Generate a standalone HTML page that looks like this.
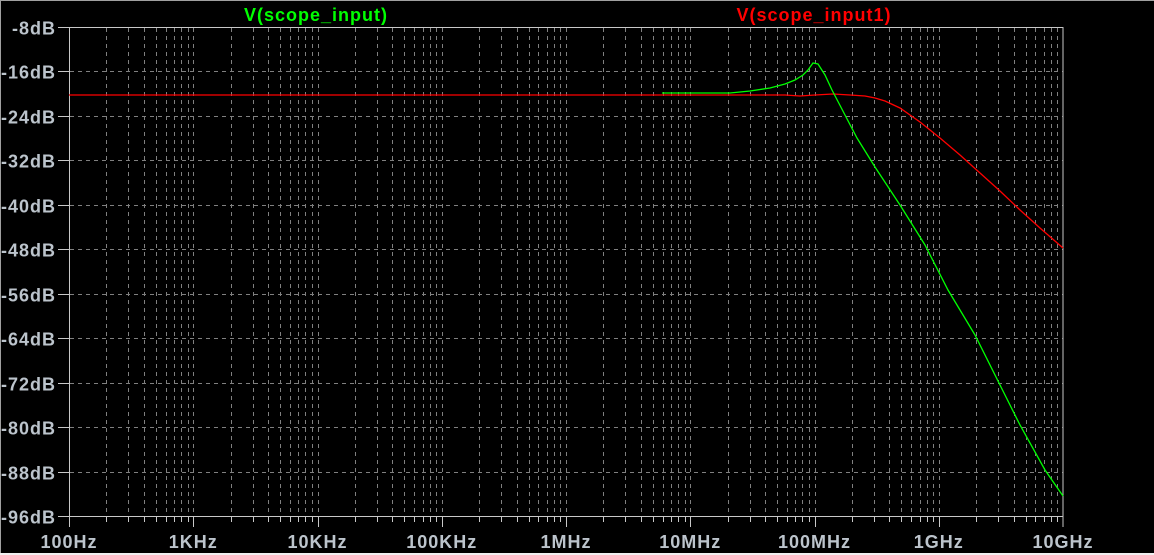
<!DOCTYPE html>
<html><head><meta charset="utf-8"><style>
html,body{margin:0;padding:0;background:#000;width:1154px;height:555px;overflow:hidden}
svg{display:block}
text{font-family:"Liberation Sans",sans-serif;font-weight:bold;font-size:18px;letter-spacing:1px}
</style></head><body>
<svg id="s" width="1154" height="555" xmlns="http://www.w3.org/2000/svg">
<rect x="0" y="0" width="1154" height="555" fill="#000"/>
<line x1="0.5" y1="0" x2="0.5" y2="555" stroke="#a0a0a0"/>
<line x1="0" y1="0.5" x2="1154" y2="0.5" stroke="#a0a0a0"/>
<rect x="0" y="553" width="1154" height="2" fill="#f0f0f0"/>
<g id="grid"></g>
<rect x="69.5" y="27.5" width="993.5" height="489" fill="none" stroke="#c8c8c8"/>
<text x="316" y="21" fill="#00ff00" text-anchor="middle">V(scope_input)</text>
<text x="814" y="21" fill="#ff0000" text-anchor="middle">V(scope_input1)</text>
<g id="lbl" fill="#bcc4cc"></g>
<polyline fill="none" stroke="#ff0000" stroke-width="1.3" points="69,95 785,95 800,96 815,95 833,94 850,95 865,96 875,98 885,101 900,108 920,122 940,138 960,155 980,173 1000,191 1020,210 1040,228 1063,248"/>
<polyline fill="none" stroke="#00ff00" stroke-width="1.3" points="662,93 730,93 750,91 770,88 785,84 795,80 803,75 808,70 813,63 818,64 825,75 832,90 845,115 857,138 875,167 900,205 925,245 948,290 975,335 1000,385 1020,425 1045,470 1063,496"/>
</svg>
<script>
var g=document.getElementById('grid'),l=document.getElementById('lbl'),h='',t='';
var X0=69,D=124.25,Y0=27,DY=44.45;
for(var d=0;d<8;d++){for(var k=2;k<=9;k++){var x=Math.round(X0+D*(d+Math.log10(k)))+0.5;
h+='<line x1="'+x+'" y1="28" x2="'+x+'" y2="516" stroke="#808080" stroke-dasharray="4,4"/>';
h+='<line x1="'+x+'" y1="516" x2="'+x+'" y2="522" stroke="#c8c8c8"/>';}}
for(var d=1;d<8;d++){var x=Math.round(X0+D*d)+0.5;h+='<line x1="'+x+'" y1="28" x2="'+x+'" y2="527" stroke="#808080" stroke-dasharray="4,4"/>';h+='<line x1="'+x+'" y1="516" x2="'+x+'" y2="527" stroke="#c8c8c8"/>';}
h+='<line x1="69.5" y1="516" x2="69.5" y2="527" stroke="#c8c8c8"/><line x1="1063" y1="516" x2="1063" y2="527" stroke="#c8c8c8"/>';
for(var i=0;i<12;i++){var y=Math.round(Y0+DY*i)+0.5;
if(i>0&&i<11)h+='<line x1="70" y1="'+y+'" x2="1063" y2="'+y+'" stroke="#808080" stroke-dasharray="4,4"/>';
h+='<line x1="58" y1="'+y+'" x2="70" y2="'+y+'" stroke="#c8c8c8"/>';
t+='<text x="56" y="'+(y+7)+'" text-anchor="end">'+(-8-8*i)+'dB</text>';}
var xl=['100Hz','1KHz','10KHz','100KHz','1MHz','10MHz','100MHz','1GHz','10GHz'];
for(var d=0;d<9;d++){t+='<text x="'+(X0+D*d)+'" y="548" text-anchor="middle">'+xl[d]+'</text>';}
g.innerHTML=h;l.innerHTML=t;
</script>
</body></html>
